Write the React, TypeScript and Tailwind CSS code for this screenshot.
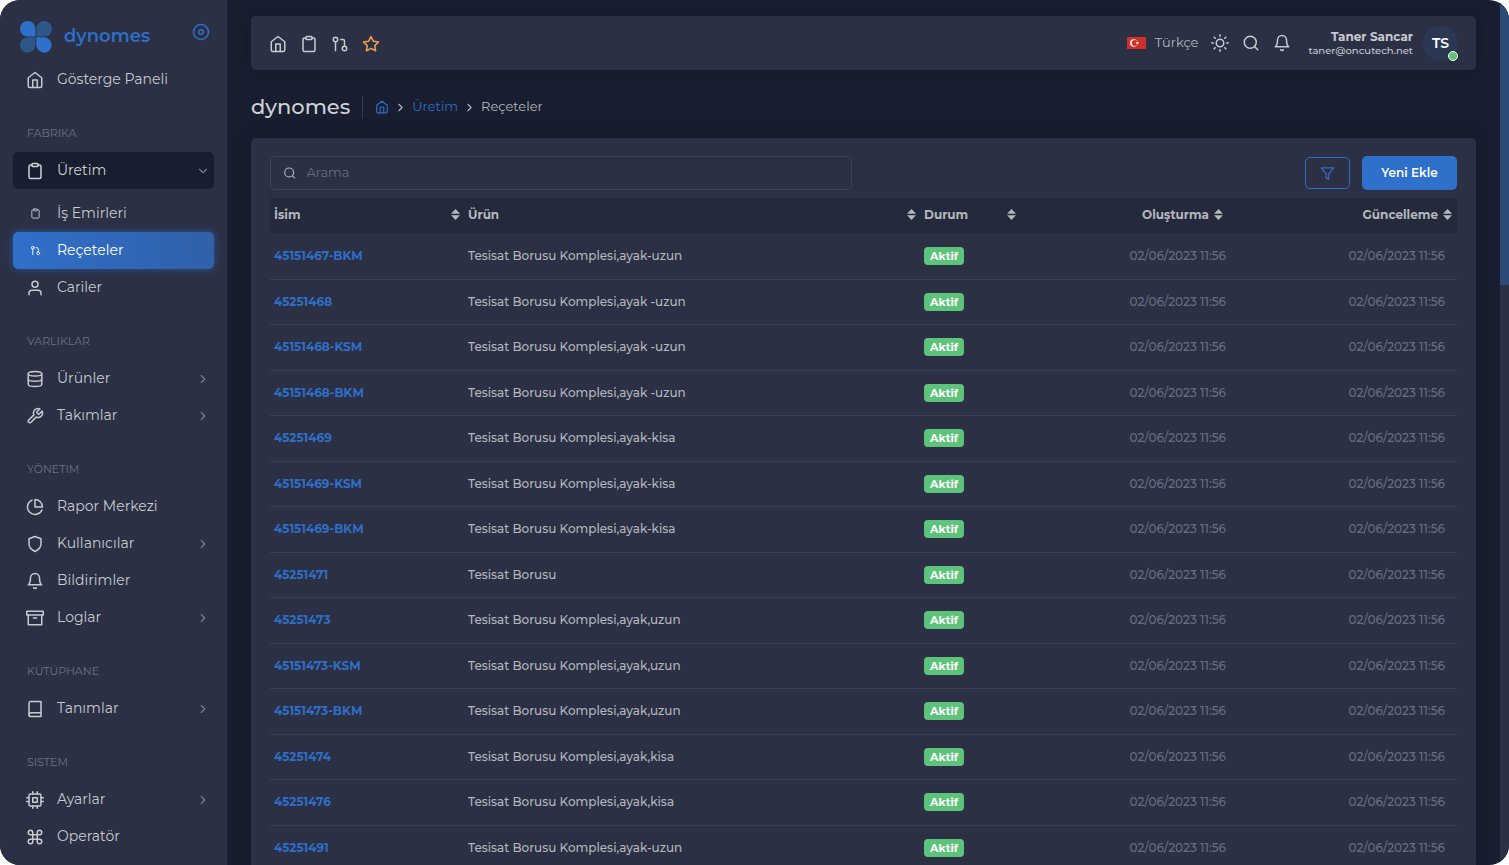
import React from 'react';
import { IconType } from 'react-icons';
import {
    FiArchive, FiBell, FiBook, FiChevronDown, FiChevronRight, FiClipboard, FiCommand, FiCpu, FiDatabase, FiDisc,
    FiFilter, FiGitPullRequest, FiHome, FiPieChart, FiSearch, FiShield, FiStar, FiSun, FiTool, FiUser,
} from 'react-icons/fi';

interface NavItem {
    label: string;
    icon: IconType;
    expandable?: boolean;
    open?: boolean;
    active?: boolean;
    children?: NavItem[];
}

interface NavSection {
    title?: string;
    items: NavItem[];
}

interface Recipe {
    name: string;
    product: string;
}

const sections: NavSection[] = [
    { items: [{ label: 'Gösterge Paneli', icon: FiHome }] },
    {
        title: 'FABRIKA',
        items: [
            {
                label: 'Üretim',
                icon: FiClipboard,
                expandable: true,
                open: true,
                children: [
                    { label: 'İş Emirleri', icon: FiClipboard },
                    { label: 'Reçeteler', icon: FiGitPullRequest, active: true },
                ],
            },
            { label: 'Cariler', icon: FiUser },
        ],
    },
    {
        title: 'VARLIKLAR',
        items: [
            { label: 'Ürünler', icon: FiDatabase, expandable: true },
            { label: 'Takımlar', icon: FiTool, expandable: true },
        ],
    },
    {
        title: 'YÖNETIM',
        items: [
            { label: 'Rapor Merkezi', icon: FiPieChart },
            { label: 'Kullanıcılar', icon: FiShield, expandable: true },
            { label: 'Bildirimler', icon: FiBell },
            { label: 'Loglar', icon: FiArchive, expandable: true },
        ],
    },
    { title: 'KÜTÜPHANE', items: [{ label: 'Tanımlar', icon: FiBook, expandable: true }] },
    {
        title: 'SISTEM',
        items: [
            { label: 'Ayarlar', icon: FiCpu, expandable: true },
            { label: 'Operatör', icon: FiCommand },
        ],
    },
];

const recipes: Recipe[] = [
    { name: '45151467-BKM', product: 'Tesisat Borusu Komplesi,ayak-uzun' },
    { name: '45251468', product: 'Tesisat Borusu Komplesi,ayak -uzun' },
    { name: '45151468-KSM', product: 'Tesisat Borusu Komplesi,ayak -uzun' },
    { name: '45151468-BKM', product: 'Tesisat Borusu Komplesi,ayak -uzun' },
    { name: '45251469', product: 'Tesisat Borusu Komplesi,ayak-kisa' },
    { name: '45151469-KSM', product: 'Tesisat Borusu Komplesi,ayak-kisa' },
    { name: '45151469-BKM', product: 'Tesisat Borusu Komplesi,ayak-kisa' },
    { name: '45251471', product: 'Tesisat Borusu' },
    { name: '45251473', product: 'Tesisat Borusu Komplesi,ayak,uzun' },
    { name: '45151473-KSM', product: 'Tesisat Borusu Komplesi,ayak,uzun' },
    { name: '45151473-BKM', product: 'Tesisat Borusu Komplesi,ayak,uzun' },
    { name: '45251474', product: 'Tesisat Borusu Komplesi,ayak,kisa' },
    { name: '45251476', product: 'Tesisat Borusu Komplesi,ayak,kisa' },
    { name: '45251491', product: 'Tesisat Borusu Komplesi,ayak-uzun' },
];

const Logo: React.FC = () => (
    <svg width="32" height="32" viewBox="0 0 32 32" aria-hidden="true">
        <path d="M7.7 0a7.7 7.7 0 0 1 7.7 7.7v7.7H7.7a7.7 7.7 0 0 1 0-15.4z" fill="#2f70cb" />
        <path d="M24.3 0a7.7 7.7 0 0 1 0 15.4h-8V7.7A7.7 7.7 0 0 1 24.3 0z" fill="#2c5788" />
        <path d="M7.7 16.3h7.7v8a7.7 7.7 0 1 1-7.7-8z" fill="#2c5788" />
        <path d="M16.3 16.3h8a7.7 7.7 0 1 1-8 8z" fill="#2f70cb" />
    </svg>
);

const TurkishFlag: React.FC = () => (
    <svg width="19" height="12" viewBox="0 0 19 12" aria-hidden="true">
        <rect width="19" height="12" fill="#d32f2a" />
        <circle cx="6.8" cy="6" r="3.7" fill="#fff" />
        <circle cx="7.8" cy="6" r="3" fill="#d32f2a" />
        <path d="M12.3 6l-1.3.5v1.3l-.8-1.1-1.3.4.8-1.1-.8-1.1 1.3.4.8-1.1v1.3z" fill="#fff" />
    </svg>
);

const SortIcon: React.FC = () => (
    <svg width="9" height="11" viewBox="0 0 9 11" className="shrink-0" aria-hidden="true">
        <path d="M4.5 0L9 4.8H0z M0 6.2h9L4.5 11z" fill="currentColor" />
    </svg>
);

const NavLink: React.FC<{ item: NavItem; nested?: boolean }> = ({ item, nested }) => {
    const Icon = item.icon;
    const state = item.active
        ? 'bg-linear-to-r from-[#2f70cb] to-[#3060a8] text-white shadow-[0_0_8px_rgba(47,112,203,0.6)]'
        : item.open
            ? 'bg-[#181d2f] text-[#d0d2d6]'
            : 'text-[#c8cad0]';

    return (
        <li>
            <a href="#" className={`flex h-[37px] items-center gap-[13px] rounded-[5px] pl-[13px] pr-1 ${state}`}>
                <span className="flex w-[18px] justify-center">
                    <Icon size={nested ? 11 : 18} />
                </span>
                <span className="flex-1 pb-0.5">{item.label}</span>
                {item.expandable && (item.open
                    ? <FiChevronDown size={14} className="text-[#7a7e8c]" />
                    : <FiChevronRight size={14} className="text-[#7a7e8c]" />)}
            </a>
            {item.children && (
                <ul className="mt-1.5">
                    {item.children.map((child) => <NavLink key={child.label} item={child} nested />)}
                </ul>
            )}
        </li>
    );
};

const Sidebar: React.FC = () => (
    <aside className="w-[227px] shrink-0 overflow-hidden bg-[#2b3044] px-[13px] text-sm">
        <div className="flex h-[61px] items-start justify-between pl-[7px] pr-1 pt-[21px]">
            <a href="#" className="flex items-center gap-3 text-lg font-semibold text-[#2f6ec6]">
                <Logo />
                <span className="pb-0.5">dynomes</span>
            </a>
            <button type="button" aria-label="Menüyü sabitle" className="mt-0.5 text-[#2f6ec6]">
                <FiDisc size={18} />
            </button>
        </div>
        <nav>
            {sections.map((section) => (
                <div key={section.items[0].label}>
                    {section.title && (
                        <h2 className="pb-[9px] pl-3.5 pt-[25px] text-[11px] leading-5 text-[#6c7282]">{section.title}</h2>
                    )}
                    <ul>
                        {section.items.map((item) => <NavLink key={item.label} item={item} />)}
                    </ul>
                </div>
            ))}
        </nav>
    </aside>
);

const Topbar: React.FC = () => (
    <header className="mt-4 flex h-[54px] items-center justify-between rounded-[5px] bg-[#2b3044] px-[18px] text-[#c8cad0] shadow-[0_0_10px_rgba(20,24,40,0.4)]">
        <div className="flex items-center gap-[13px] pt-0.5">
            <button type="button" aria-label="Gösterge Paneli"><FiHome size={18} /></button>
            <button type="button" aria-label="İş Emirleri"><FiClipboard size={18} /></button>
            <button type="button" aria-label="Reçeteler"><FiGitPullRequest size={18} /></button>
            <button type="button" aria-label="Favoriler" className="text-[#f2a04e]"><FiStar size={18} /></button>
        </div>
        <div className="flex items-center gap-[13px]">
            <button type="button" className="flex items-center gap-[9px] text-[13px] text-[#b4b7bd]">
                <TurkishFlag />
                Türkçe
            </button>
            <button type="button" aria-label="Tema"><FiSun size={18} /></button>
            <button type="button" aria-label="Ara"><FiSearch size={18} /></button>
            <button type="button" aria-label="Bildirimler"><FiBell size={18} /></button>
            <div className="ml-1 flex items-center gap-2.5">
                <div className="text-right">
                    <p className="text-xs font-bold leading-4">Taner Sancar</p>
                    <p className="text-[10px] font-medium leading-3">taner@oncutech.net</p>
                </div>
                <div className="relative flex size-[35px] items-center justify-center rounded-full bg-[#2b3853] text-sm font-semibold text-white">
                    TS
                    <span className="absolute bottom-0 right-0 size-2.5 rounded-full border border-white bg-[#5ec37a]" />
                </div>
            </div>
        </div>
    </header>
);

const Breadcrumb: React.FC = () => (
    <div className="flex h-[68px] items-center pt-1.5">
        <h1 className="border-r border-[#363c50] pr-3 text-[21px] font-medium leading-6 text-[#d0d2d6]">dynomes</h1>
        <nav aria-label="breadcrumb" className="flex items-center gap-[5px] pl-3 text-[13px] text-[#b4b7bd]">
            <a href="#" aria-label="Ana sayfa" className="text-[#2f6ec6]"><FiHome size={14} /></a>
            <FiChevronRight size={13} />
            <a href="#" className="text-[#2f6ec6]">Üretim</a>
            <FiChevronRight size={13} />
            <span>Reçeteler</span>
        </nav>
    </div>
);

const RecipeTable: React.FC = () => (
    <table className="mt-2 w-full table-fixed text-xs text-[#b4b7bd]">
        <thead className="bg-[#24293b]">
            <tr className="h-[35px]">
                <th scope="col" className="w-[194px] px-1 pb-0.5 font-bold">
                    <span className="flex items-center justify-between">İsim <SortIcon /></span>
                </th>
                <th scope="col" className="px-1 pb-0.5 font-bold">
                    <span className="flex items-center justify-between">Ürün <SortIcon /></span>
                </th>
                <th scope="col" className="w-[100px] px-1 pb-0.5 font-bold">
                    <span className="flex items-center justify-between">Durum <SortIcon /></span>
                </th>
                <th scope="col" className="w-[218px] pb-0.5 pr-[15px] font-bold">
                    <span className="flex items-center justify-end gap-[5px]">Oluşturma <SortIcon /></span>
                </th>
                <th scope="col" className="w-[219px] pb-0.5 pr-[5px] font-bold">
                    <span className="flex items-center justify-end gap-[5px]">Güncelleme <SortIcon /></span>
                </th>
            </tr>
        </thead>
        <tbody>
            {recipes.map((recipe) => (
                <tr key={recipe.name} className="border-b border-[#3a3f52] font-medium odd:h-[46px] even:h-[45px]">
                    <td className="px-1">
                        <a href="#" className="font-bold text-[#2f6ec6]">{recipe.name}</a>
                    </td>
                    <td className="px-1">{recipe.product}</td>
                    <td className="px-1">
                        <span className="inline-block rounded-sm bg-[#5ec37a] px-1.5 text-[11px] font-bold leading-[18px] text-white">Aktif</span>
                    </td>
                    <td className="pr-3 text-right text-[#676d7d]">02/06/2023 11:56</td>
                    <td className="pr-3 text-right text-[#676d7d]">02/06/2023 11:56</td>
                </tr>
            ))}
        </tbody>
    </table>
);

const App: React.FC = () => {
    return (
        <div className="flex h-screen overflow-hidden rounded-[20px] bg-[#181d2f] font-['Montserrat','Inter',sans-serif]">
            <Sidebar />
            <main className="min-w-0 flex-1 overflow-hidden px-6">
                <Topbar />
                <Breadcrumb />
                <section className="rounded-[5px] bg-[#2b3044] px-[19px] pt-[18px] shadow-[0_0_16px_rgba(20,24,40,0.6)]">
                    <div className="flex items-center justify-between">
                        <label className="flex h-[34px] w-[49%] items-center gap-2.5 rounded-[5px] border border-[#3d4256] px-3 text-[#b4b7bd]">
                            <FiSearch size={14} />
                            <input
                                type="text"
                                aria-label="Arama"
                                placeholder="Arama"
                                className="w-full bg-transparent text-[13px] outline-none placeholder:text-[#676d7d]"
                            />
                        </label>
                        <div className="flex items-center gap-3">
                            <button type="button" aria-label="Filtrele" className="flex h-8 w-[45px] items-center justify-center rounded-[5px] border border-[#2f6ec6] text-[#2f6ec6]">
                                <FiFilter size={15} />
                            </button>
                            <button type="button" className="h-[34px] w-[95px] rounded-[5px] bg-[#2f70cb] text-xs font-semibold text-white">
                                Yeni Ekle
                            </button>
                        </div>
                    </div>
                    <RecipeTable />
                </section>
            </main>
            {/* Scroll track with its thumb */}
            <div className="w-[9px] shrink-0 bg-[#2b3044]">
                <div className="h-[33%] bg-[#2c4a77]" />
            </div>
        </div>
    );
};

export default App;
